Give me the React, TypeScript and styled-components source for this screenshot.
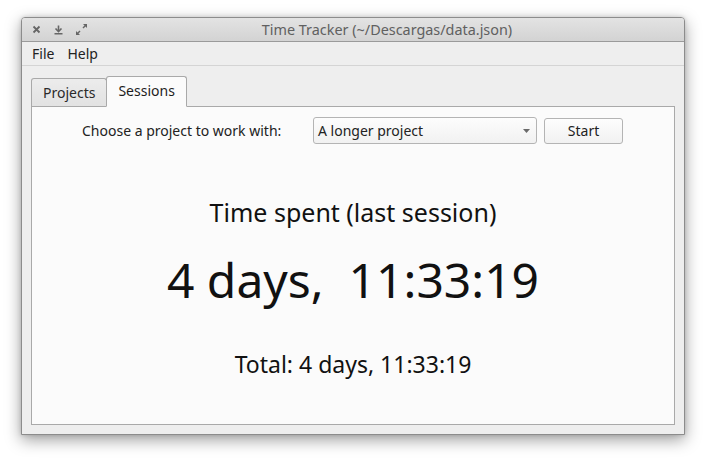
import React from "react";
import styled, { createGlobalStyle } from "styled-components";

const Global = createGlobalStyle`
  html, body { margin: 0; padding: 0; background: #ffffff; }
  body { font-family: "Noto Sans", "Open Sans", sans-serif; }
`;

const Page = styled.div`
  width: 708px;
  height: 458px;
  padding: 17px 24px 0 21px;
  box-sizing: border-box;
`;

const Window = styled.div`
  width: 664px;
  height: 418px;
  box-sizing: border-box;
  border: 1px solid #8c8c8c;
  border-radius: 4px 4px 0 0;
  background: #eeeeee;
  box-shadow: 0 5px 16px rgba(0, 0, 0, 0.38), 0 0 4px rgba(0, 0, 0, 0.15);
  display: flex;
  flex-direction: column;
  overflow: hidden;
`;

const TitleBar = styled.div`
  height: 23px;
  flex: none;
  position: relative;
  display: flex;
  align-items: center;
  justify-content: center;
  background: linear-gradient(#e3e3e3, #d3d3d3);
  border-bottom: 1px solid #9a9a9a;
`;

const TitleButtons = styled.div`
  position: absolute;
  left: 10px;
  top: 0;
  height: 100%;
  display: flex;
  align-items: center;
  gap: 13px;
`;

const TitleText = styled.div`
  font-size: 14.4px;
  color: #606060;
  padding-left: 68px;
`;

const MenuBar = styled.div`
  height: 23px;
  flex: none;
  display: flex;
  align-items: center;
  gap: 13px;
  padding-left: 10px;
  border-bottom: 1px solid #d4d4d4;
  font-size: 14px;
  color: #222;
`;

const MenuItem = styled.span``;

const Body = styled.div`
  flex: 1;
  display: flex;
  flex-direction: column;
  padding: 9px 9px 9px 9px;
`;

const TabRow = styled.div`
  display: flex;
  align-items: flex-end;
  height: 31px;
  position: relative;
  z-index: 1;
`;

const Tab = styled.div<{ $active?: boolean }>`
  box-sizing: border-box;
  height: ${(p) => (p.$active ? 31 : 28)}px;
  padding: 0 11px;
  display: flex;
  align-items: center;
  justify-content: center;
  font-size: 14px;
  color: ${(p) => (p.$active ? "#1e1e1e" : "#2a2a2a")};
  border: 1px solid #a9a9a9;
  border-bottom: ${(p) => (p.$active ? "1px solid #fbfbfb" : "none")};
  border-radius: 3px 3px 0 0;
  background: ${(p) => (p.$active ? "#fbfbfb" : "linear-gradient(#ececec, #e2e2e2)")};
  margin-bottom: ${(p) => (p.$active ? -1 : 0)}px;
  padding-bottom: ${(p) => (p.$active ? 3 : 0)}px;
  margin-left: ${(p) => (p.$active ? -1 : 0)}px;
`;

const Pane = styled.div`
  flex: 1;
  box-sizing: border-box;
  border: 1px solid #a9a9a9;
  background: #fbfbfb;
  display: flex;
  flex-direction: column;
  align-items: center;
`;

const ChooserRow = styled.div`
  align-self: stretch;
  display: flex;
  align-items: center;
  padding: 10px 51px 0 50px;
  font-size: 14px;
  color: #222;
`;

const Label = styled.div`
  flex: 1;
`;

const Combo = styled.div`
  width: 224px;
  height: 27px;
  box-sizing: border-box;
  border: 1px solid #b4b4b4;
  border-radius: 3px;
  background: linear-gradient(#fdfdfd, #f1f1f1);
  display: flex;
  align-items: center;
  padding: 0 6px 0 4px;
  margin-right: 7px;
`;

const ComboText = styled.span`
  flex: 1;
`;

const Button = styled.div`
  width: 79px;
  height: 26px;
  box-sizing: border-box;
  border: 1px solid #b4b4b4;
  border-radius: 3px;
  background: linear-gradient(#fdfdfd, #f1f1f1);
  display: flex;
  align-items: center;
  justify-content: center;
`;

const Heading = styled.div<{ $size: number; $top: number }>`
  font-size: ${(p) => p.$size}px;
  color: #111;
  margin-top: ${(p) => p.$top}px;
  line-height: 1.2;
  white-space: pre;
`;

const CloseIcon = () => (
  <svg width="9" height="9" viewBox="0 0 9 9">
    <path d="M1.5 1.5 L7.5 7.5 M7.5 1.5 L1.5 7.5" stroke="#666" strokeWidth="1.8" />
  </svg>
);

const MinIcon = () => (
  <svg width="9" height="10" viewBox="0 0 9 10">
    <path d="M4.5 0.5 V6" stroke="#666" strokeWidth="1.6" />
    <path d="M1.5 3.5 L4.5 6.5 L7.5 3.5" stroke="#666" strokeWidth="1.6" fill="none" />
    <path d="M0.5 8.8 H8.5" stroke="#666" strokeWidth="1.6" />
  </svg>
);

const MaxIcon = () => (
  <svg width="12" height="11" viewBox="0 0 12 11">
    <path d="M11 0 L7 0 L11 4 Z" fill="#666" />
    <path d="M10 1 L7 4" stroke="#666" strokeWidth="1.5" />
    <path d="M0 11 L0 7 L4 11 Z" fill="#666" />
    <path d="M1 10 L4 7" stroke="#666" strokeWidth="1.5" />
  </svg>
);

const Arrow = () => (
  <svg width="7" height="4" viewBox="0 0 7 4">
    <path d="M0 0 H7 L3.5 4 Z" fill="#6a6a6a" />
  </svg>
);

export default function App() {
  return (
    <>
      <Global />
      <Page>
        <Window>
          <TitleBar>
            <TitleButtons>
              <CloseIcon />
              <MinIcon />
              <MaxIcon />
            </TitleButtons>
            <TitleText>Time Tracker (~/Descargas/data.json)</TitleText>
          </TitleBar>
          <MenuBar>
            <MenuItem>File</MenuItem>
            <MenuItem>Help</MenuItem>
          </MenuBar>
          <Body>
            <TabRow>
              <Tab>Projects</Tab>
              <Tab $active>Sessions</Tab>
            </TabRow>
            <Pane>
              <ChooserRow>
                <Label>Choose a project to work with:</Label>
                <Combo>
                  <ComboText>A longer project</ComboText>
                  <Arrow />
                </Combo>
                <Button>Start</Button>
              </ChooserRow>
              <Heading $size={25} $top={53}>Time spent (last session)</Heading>
              <Heading $size={48} $top={24}>{"4 days,  11:33:19"}</Heading>
              <Heading $size={23} $top={42}>Total: 4 days, 11:33:19</Heading>
            </Pane>
          </Body>
        </Window>
      </Page>
    </>
  );
}
